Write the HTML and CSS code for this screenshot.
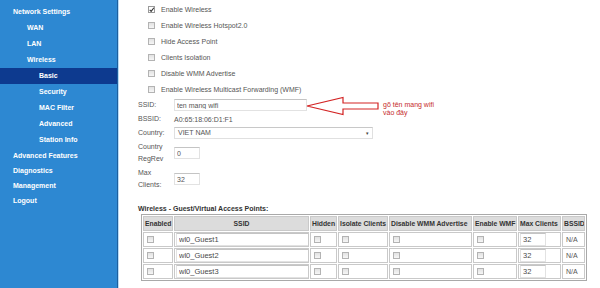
FILE: index.html
```html
<!DOCTYPE html>
<html lang="en">
  <head>
    <meta charset="UTF-8" />
    <title>Wireless -- Basic</title>
    <link rel="stylesheet" href="styles.css">
  </head>
  <body>
    <div class="app">
      <nav class="menu">
        <a class="top">Network Settings</a>
        <a class="sub">WAN</a>
        <a class="sub">LAN</a>
        <a class="sub">Wireless</a>
        <a class="sub2 active">Basic</a>
        <a class="sub2">Security</a>
        <a class="sub2">MAC Filter</a>
        <a class="sub2">Advanced</a>
        <a class="sub2">Station Info</a>
        <a class="top">Advanced Features</a>
        <a class="top">Diagnostics</a>
        <a class="top">Management</a>
        <a class="top">Logout</a>
      </nav>
      <main class="content">
        <div class="options">
          <label><input type="checkbox" checked /> Enable Wireless</label>
          <label><input type="checkbox" /> Enable Wireless Hotspot2.0</label>
          <label><input type="checkbox" /> Hide Access Point</label>
          <label><input type="checkbox" /> Clients Isolation</label>
          <label><input type="checkbox" /> Disable WMM Advertise</label>
          <label><input type="checkbox" /> Enable Wireless Multicast Forwarding (WMF)</label>
        </div>
        <div class="fields">
          <span class="name">SSID:</span>
          <div><input class="ssid" type="text" value="ten mang wifi" /></div>
          <span class="name">BSSID:</span>
          <div>A0:65:18:06:D1:F1</div>
          <span class="name">Country:</span>
          <div><div class="select">VIET NAM <span class="caret">&#9662;</span></div></div>
          <span class="name">Country RegRev</span>
          <div><input class="small" type="text" value="0" /></div>
          <span class="name">Max Clients:</span>
          <div><input class="small" type="text" value="32" /></div>
        </div>
        <div class="note">
          <svg width="74" height="20" viewBox="0 0 74 20">
            <path d="M1 10 L37 1.5 L37 7 L72 7 L72 13 L37 13 L37 18.5 Z" fill="none" stroke="#d32424" stroke-width="1.2" stroke-linejoin="miter" />
          </svg>
          <span>gõ tên mang wifi<br />vào đây</span>
        </div>
        <h4>Wireless - Guest/Virtual Access Points:</h4>
        <table class="guests">
          <tr>
            <th class="c1">Enabled</th>
            <th class="c2">SSID</th>
            <th class="c3">Hidden</th>
            <th class="c4">Isolate Clients</th>
            <th class="c5">Disable WMM Advertise</th>
            <th class="c6">Enable WMF</th>
            <th class="c7">Max Clients</th>
            <th class="c8">BSSID</th>
          </tr>
          <tr>
            <td><input type="checkbox" /></td>
            <td><input class="guest" type="text" value="wl0_Guest1" /></td>
            <td><input type="checkbox" /></td>
            <td><input type="checkbox" /></td>
            <td><input type="checkbox" /></td>
            <td><input type="checkbox" /></td>
            <td><input class="small" type="text" value="32" /></td>
            <td>N/A</td>
          </tr>
          <tr>
            <td><input type="checkbox" /></td>
            <td><input class="guest" type="text" value="wl0_Guest2" /></td>
            <td><input type="checkbox" /></td>
            <td><input type="checkbox" /></td>
            <td><input type="checkbox" /></td>
            <td><input type="checkbox" /></td>
            <td><input class="small" type="text" value="32" /></td>
            <td>N/A</td>
          </tr>
          <tr>
            <td><input type="checkbox" /></td>
            <td><input class="guest" type="text" value="wl0_Guest3" /></td>
            <td><input type="checkbox" /></td>
            <td><input type="checkbox" /></td>
            <td><input type="checkbox" /></td>
            <td><input type="checkbox" /></td>
            <td><input class="small" type="text" value="32" /></td>
            <td>N/A</td>
          </tr>
        </table>
      </main>
    </div>
  </body>
</html>
```

FILE: styles.css
```css
* {
  box-sizing: border-box;
}
html,
body {
  margin: 0;
  height: 100%;
  font-family: "Liberation Sans", Arial, sans-serif;
  font-size: 7px;
  color: #555;
  background: #fff;
  overflow: hidden;
}
.app {
  display: flex;
  height: 100%;
}
.menu {
  width: 118px;
  flex: none;
  background-color: #2d88d2;
  border-right: 1px solid #1d5f9e;
  box-shadow: 1px 0 0 #b9dcf6;
  padding-top: 4px;
  display: flex;
  flex-direction: column;
}
.menu a {
  display: block;
  color: #fff;
  font-weight: 700;
  font-size: 7px;
  line-height: 16px;
  height: 16px;
  white-space: nowrap;
}
.menu a.top {
  padding-left: 13px;
}
.menu a.top ~ a.top {
  height: 15px;
  line-height: 15px;
}
.menu a.sub {
  padding-left: 27px;
}
.menu a.sub2 {
  padding-left: 39px;
}
.menu a.active {
  background-color: #0d3a8f;
}
.content {
  position: relative;
  flex: 1;
  padding: 1px 0 0 20px;
}
input[type="checkbox"] {
  appearance: none;
  width: 7px;
  height: 7px;
  margin: 0;
  border: 1px solid #b3b3b3;
  background: linear-gradient(#e2e2e2, #f6f6f6);
  vertical-align: middle;
}
input[type="checkbox"]:checked {
  background: #fff url("data:image/svg+xml,%3Csvg xmlns='http://www.w3.org/2000/svg' viewBox='0 0 7 7'%3E%3Cpath d='M1.3 3.6 L2.9 5.2 L5.8 1.4' fill='none' stroke='%23333' stroke-width='1.2'/%3E%3C/svg%3E") no-repeat center / 6px 6px;
  border-color: #999;
}
.options label {
  display: flex;
  align-items: center;
  height: 16px;
  padding-left: 10px;
  gap: 6px;
}
.fields {
  display: grid;
  grid-template-columns: 36px auto;
  align-items: center;
  row-gap: 2px;
  margin-top: 2px;
}
.fields .name {
  line-height: 12px;
  width: 30px;
}
input[type="text"] {
  font-family: inherit;
  font-size: 7px;
  line-height: 10px;
  color: #555;
  height: 12px;
  padding: 0 2px;
  border: 1px solid #e2e2e2;
  border-top-color: #c4c4c4;
  outline: none;
  vertical-align: middle;
}
input.ssid {
  width: 133px;
}
input.small {
  width: 26px;
}
.select {
  position: relative;
  width: 199px;
  height: 12px;
  line-height: 10px;
  padding-left: 3px;
  border: 1px solid #e0e0e0;
  border-top-color: #c8c8c8;
}
.select .caret {
  position: absolute;
  right: 3px;
  top: 0;
  font-size: 5px;
  color: #444;
}
.note {
  position: absolute;
  left: 188px;
  top: 96px;
  display: flex;
  align-items: flex-start;
  gap: 3px;
  color: #c62b2b;
  font-size: 7px;
  line-height: 8px;
}
.note span {
  padding-top: 5px;
}
h4 {
  margin: 14px 0 2px;
  font-size: 7px;
  color: #333;
}
table.guests {
  margin-left: 3px;
  border: 1px solid #a9a9a9;
  border-collapse: separate;
  border-spacing: 1px;
  table-layout: fixed;
  width: 446px;
}
.guests th,
.guests td {
  border: 1px solid #c9c9c9;
  height: 15px;
  padding: 0 0 0 3px;
  text-align: left;
  white-space: nowrap;
  overflow: hidden;
}
.guests th {
  background: #dcdcdc;
  color: #333;
  font-weight: 700;
  padding: 0 1px;
  font-size: 6.8px;
}
.guests th.c2 {
  text-align: center;
}
.guests td:nth-child(2),
.guests td:nth-child(7) {
  padding-left: 1px;
}
.guests input[type="text"] {
  height: 13px;
  font-size: 7.5px;
  line-height: 11px;
  color: #4a4a4a;
}
input.guest {
  width: 133px;
}
.c1 { width: 30px; }
.c2 { width: 135px; }
.c3 { width: 27px; }
.c4 { width: 50px; }
.c5 { width: 83px; }
.c6 { width: 44px; }
.c7 { width: 43px; }
.c8 { width: 23px; }
```
